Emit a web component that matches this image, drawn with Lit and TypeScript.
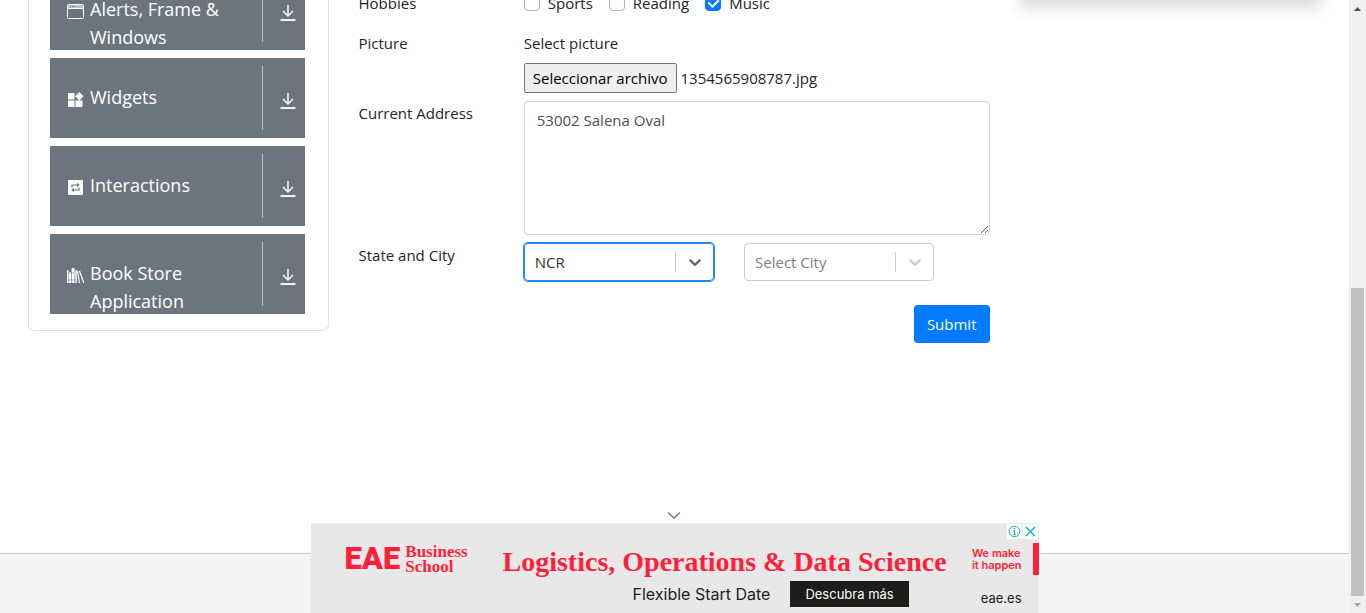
import { LitElement, html, css, svg } from "lit";
import { customElement, property, state } from "lit/decorators.js";

const icons = {
  window: svg`<g fill="none" stroke="#fff" stroke-width="1"><rect x=".5" y="1.500" width="16" height="14" rx="1"/><path d="M1 5.500h15"/></g><path d="M1 2h15v3H1z" fill="#fff" opacity=".55"/><path d="M3 3h1v1H3zM5 3h1v1H5zM7 3h1v1H7z" fill="#6c757d"/>`,
  widgets: svg`<path fill="#fff" d="M1 2h6.500v6.500H1zM1 9.500h6.500V16H1zM8.500 9.500h7V16h-7zM12.300 1l4.200 4.200-4.200 4.200-4.200-4.200z"/>`,
  loop: svg`<rect x="1" y="1" width="15" height="15" rx="1" fill="#fff"/><g fill="none" stroke="#6c757d" stroke-width="1.200"><path d="M5 8.500V6h5.500M12 8.500V11H6.500"/></g><path fill="#6c757d" d="M10 3.800l2.600 2.200-2.600 2.200zM7 8.800L4.400 11 7 13.200z"/>`,
  books: svg`<path fill="#fff" d="M0 3h1.500v13H0zM2 5h2v11H2zM4.600 1h3v15h-3zM8.300 3h1.500v13H8.300z"/><path d="M1 6h6M1 13h8" stroke="#6c757d" stroke-width=".6"/><path d="M10.500 4l2 12M12.500 4l4.300 12" stroke="#fff" stroke-width="1.200" fill="none"/>`,
};

type IconName = keyof typeof icons;

@customElement("menu-group")
class MenuGroup extends LitElement {
  @property() label = "";
  @property() icon: IconName = "window";

  static styles = css`
    :host { display: block; }
    .bar {
      display: flex; width: 100%; height: 80px; padding: 8px 0 8px 17px; border: 0;
      background: #6c757d; color: #fff; text-align: left; cursor: pointer;
      font: 18px/28px "Open Sans", sans-serif;
    }
    .glyph { flex: none; width: 17px; height: 17px; margin: 25px 6px 0 0; }
    .text { flex: 1; margin-top: 17px; }
    .toggle {
      flex: none; display: flex; justify-content: center; align-items: center;
      align-self: stretch; width: 43px; padding: 6px 0 0 8px; border-left: 1px solid #bbb;
      box-sizing: border-box;
    }
  `;

  render() {
    return html`<button class="bar" type="button">
      <svg class="glyph" viewBox="0 0 17 17" aria-hidden="true">${icons[this.icon]}</svg>
      <span class="text">${this.label}</span>
      <span class="toggle">
        <svg width="16" height="16" viewBox="0 0 16 16" fill="none" stroke="#fff" stroke-width="1.400" aria-hidden="true">
          <path d="M8 0v11M3 6l5 5 5-5"/><path d="M.5 15h15" stroke-width="1.800"/>
        </svg>
      </span>
    </button>`;
  }
}

@customElement("ad-banner")
class AdBanner extends LitElement {
  static styles = css`
    :host { display: block; width: 728px; }
    .collapse { display: block; margin: 0 auto; padding: 4px 2px 4px 0; border: 0; background: none; line-height: 0; }
    .banner {
      position: relative; display: flex; height: 90px; box-sizing: border-box; padding: 20px 17px 5px 34px;
      background: #e8e8e8; color: #1d1d1b; font-family: Inter, sans-serif;
    }
    .logo { display: flex; gap: 5px; width: 158px; height: 32px; align-items: center; color: #ff1f3a; }
    .mark { font: 900 31px/32px Roboto, sans-serif; }
    .school { font: bold 17px/15px "Liberation Serif", serif; }
    .headline { margin: 0; color: #ff1f3a; font: bold 28px/38px "Liberation Serif", serif; white-space: nowrap; }
    .offer { display: flex; align-items: center; gap: 20px; padding-left: 130px; font-size: 16px; line-height: 26px; }
    .cta { padding: 0 15px; background: #1d1d1b; color: #fff; font-size: 13px; text-decoration: none; white-space: nowrap; }
    .aside { display: flex; flex-direction: column; justify-content: space-between; margin-left: auto; }
    .motto { margin-top: 4px; color: #ff1f3a; font-size: 11px; line-height: 12px; font-weight: 600; white-space: nowrap; }
    .site { align-self: flex-end; font-size: 13px; line-height: 20px; }
    .stripe { position: absolute; right: 0; top: 20px; width: 6px; height: 32px; background: #ff1f3a; }
    .choices { position: absolute; right: 1px; top: 1px; display: flex; gap: 1px; }
    .choice { width: 15px; height: 15px; padding: 0; border: 0; background: #fff; line-height: 0; }
  `;

  render() {
    return html`
      <button class="collapse" aria-label="Collapse">
        <svg width="14" height="7" viewBox="0 0 14 7" fill="none" stroke="#777" stroke-width="1.300"><path d="M1 .5l6 5.500 6-5.500"/></svg>
      </button>
      <div class="banner">
        <div class="logo"><span class="mark">EAE</span><span class="school">Business<br />School</span></div>
        <div>
          <h2 class="headline">Logistics, Operations &amp; Data Science</h2>
          <div class="offer"><span>Flexible Start Date</span><a class="cta" href="#">Descubra más</a></div>
        </div>
        <div class="aside">
          <span class="motto">We make<br />it happen</span>
          <span class="site">eae.es</span>
        </div>
        <span class="stripe"></span>
        <div class="choices">
          <button class="choice" aria-label="Ad information">
            <svg width="15" height="15" viewBox="0 0 15 15" fill="none" stroke="#00aecd"><circle cx="7.500" cy="7.500" r="5.300"/><path d="M7.500 6.500v4.500M6.300 6.800h1.200M6 10.800h3" /><path d="M7.500 4v1.300" stroke-width="1.400"/></svg>
          </button>
          <button class="choice" aria-label="Close ad">
            <svg width="15" height="15" viewBox="0 0 15 15" fill="none" stroke="#00aecd" stroke-width="1.400"><path d="M3 3l9 9M12 3l-9 9"/></svg>
          </button>
        </div>
      </div>`;
  }
}

@customElement("app-root")
class AppRoot extends LitElement {
  @state() private fileName = "1354565908787.jpg";

  private groups: { label: string; icon: IconName }[] = [
    { label: "Alerts, Frame & Windows", icon: "window" },
    { label: "Widgets", icon: "widgets" },
    { label: "Interactions", icon: "loop" },
    { label: "Book Store Application", icon: "books" },
  ];

  private hobbies = [
    { id: "sports", label: "Sports", on: false },
    { id: "reading", label: "Reading", on: false },
    { id: "music", label: "Music", on: true },
  ];

  static styles = css`
    :host {
      display: flex; height: 100vh; overflow: hidden; background: #fff; color: #212529;
      font: 15px/24px "Open Sans", sans-serif;
    }
    * { box-sizing: border-box; }
    .page { position: relative; flex: 1; min-width: 0; display: flex; flex-direction: column; }
    .content { flex: 1; display: grid; grid-template-columns: repeat(12, 1fr); column-gap: 30px; align-items: start; margin-top: -47px; padding: 0 29px 0 28px; }
    .menu { grid-column: span 3; display: flex; flex-direction: column; gap: 8px; padding: 16px 23px 16px 21px; border: 1px solid #dfdfdf; border-radius: 6px; }
    .promo { grid-column: span 3; height: 47px; background: #fff; box-shadow: 0 8px 16px rgba(0, 0, 0, 0.15); }
    .form { grid-column: span 6; display: flex; flex-direction: column; gap: 8px; padding-top: 38px; }
    .row { display: grid; grid-template-columns: repeat(12, 1fr); column-gap: 30px; }
    .name { grid-column: span 3; }
    .field { grid-column: span 9; }
    .checks { display: flex; gap: 16px; padding-bottom: 8px; }
    .check { display: flex; align-items: center; gap: 8px; }
    .box { appearance: none; display: grid; place-items: center; width: 16px; height: 16px; margin: 0; border: 1px solid #adb5bd; border-radius: 4px; background: #fff; }
    .box:checked { border-color: #007bff; background: #007bff; }
    .box:checked::after { content: ""; width: 5px; height: 8px; margin-bottom: 2px; border: solid #fff; border-width: 0 2px 2px 0; transform: rotate(45deg); }
    .caption { display: block; margin-bottom: 8px; }
    .file { display: flex; align-items: center; gap: 4px; height: 30px; }
    .browse { height: 30px; padding: 0 8px; border: 1px solid #767676; border-radius: 2px; background: #efefef; color: #000; font: inherit; }
    .address { display: block; width: 100%; height: 134px; padding: 6px 12px; border: 1px solid #ced4da; border-radius: 4px; color: #495057; font: inherit; resize: vertical; }
    .pick { grid-column: span 4; display: grid; grid-template-columns: 1fr 38px; align-items: center; height: 38px; border: 1px solid #ccc; border-radius: 4px; color: #ccc; }
    .pick.active { border-color: #2684ff; box-shadow: 0 0 0 1px #2684ff; color: #666; }
    .select { grid-area: 1 / 1 / 2 / 3; appearance: none; width: 100%; height: 36px; padding: 0 40px 0 10px; border: 0; outline: 0; background: transparent; color: #333; font: inherit; opacity: 1; }
    .select:disabled { color: #808080; }
    .arrow { grid-area: 1 / 2; display: flex; align-items: center; justify-content: center; height: 20px; border-left: 1px solid #ccc; pointer-events: none; }
    .submit { align-self: flex-end; height: 38px; margin-top: 16px; padding: 0 13px; border: 0; border-radius: 4px; background: #007bff; color: #fff; font: inherit; }
    .footer { height: 60px; border-top: 1px solid #ccc; background: #f4f4f4; }
    .ad { position: absolute; bottom: 0; left: 50%; transform: translateX(-50%); }
    .scrollbar { flex: none; display: flex; flex-direction: column; width: 17px; background: #f0f0f0; }
    .step { display: flex; align-items: center; justify-content: center; height: 17px; }
    .before { flex: 271; }
    .thumb { flex: 308; margin: 0 2px; background: #c1c1c1; }
  `;

  private browse() {
    this.renderRoot.querySelector<HTMLInputElement>("#picture")?.click();
  }

  private picked(e: Event) {
    const file = (e.target as HTMLInputElement).files?.[0];
    if (file) this.fileName = file.name;
  }

  private arrow() {
    return html`<span class="arrow"><svg width="20" height="20" viewBox="0 0 20 20" fill="currentColor" aria-hidden="true"><path d="M4.516 7.548c.436-.446 1.043-.481 1.576 0L10 11.295l3.908-3.747c.533-.481 1.141-.446 1.574 0 .436.445.408 1.197 0 1.615-.406.418-4.695 4.502-4.695 4.502a1.095 1.095 0 0 1-1.576 0S4.924 9.581 4.516 9.163s-.436-1.170 0-1.615z"/></svg></span>`;
  }

  render() {
    return html`
      <div class="page">
        <main class="content">
          <nav class="menu">
            ${this.groups.map((g) => html`<menu-group .label=${g.label} .icon=${g.icon}></menu-group>`)}
          </nav>
          <form class="form" @submit=${(e: Event) => e.preventDefault()}>
            <div class="row">
              <span class="name">Hobbies</span>
              <div class="field checks">
                ${this.hobbies.map(
                  (h) => html`<label class="check" for=${h.id}><input class="box" type="checkbox" id=${h.id} ?checked=${h.on} />${h.label}</label>`
                )}
              </div>
            </div>
            <div class="row">
              <span class="name">Picture</span>
              <div class="field">
                <label class="caption" for="picture">Select picture</label>
                <div class="file">
                  <input type="file" id="picture" hidden @change=${this.picked} />
                  <button class="browse" type="button" @click=${this.browse}>Seleccionar archivo</button>
                  <span>${this.fileName}</span>
                </div>
              </div>
            </div>
            <div class="row">
              <label class="name" for="address">Current Address</label>
              <div class="field"><textarea class="address" id="address" .value=${"53002 Salena Oval"}></textarea></div>
            </div>
            <div class="row">
              <label class="name" for="state">State and City</label>
              <div class="pick active">
                <select class="select" id="state"><option>NCR</option></select>
                ${this.arrow()}
              </div>
              <div class="pick">
                <select class="select" aria-label="City" disabled><option>Select City</option></select>
                ${this.arrow()}
              </div>
            </div>
            <button class="submit" type="submit">Submit</button>
          </form>
          <aside class="promo"></aside>
        </main>
        <footer class="footer"></footer>
        <ad-banner class="ad"></ad-banner>
      </div>
      <div class="scrollbar" aria-hidden="true">
        <span class="step"><svg width="7" height="4" viewBox="0 0 7 4"><path d="M0 4L3.500 0 7 4z" fill="#505050"/></svg></span>
        <span class="before"></span>
        <span class="thumb"></span>
        <span class="step"><svg width="7" height="4" viewBox="0 0 7 4"><path d="M0 0h7L3.500 4z" fill="#a3a3a3"/></svg></span>
      </div>
    `;
  }
}
